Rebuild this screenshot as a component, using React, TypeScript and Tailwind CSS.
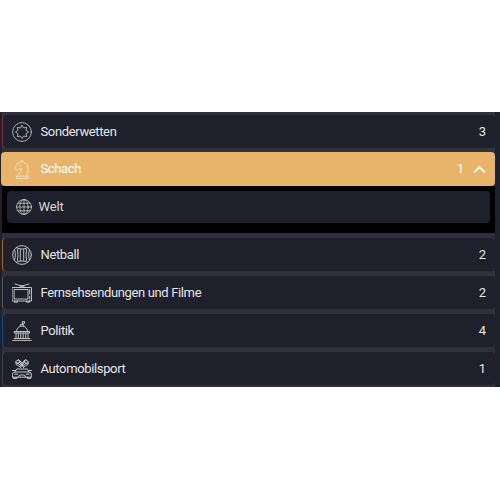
import type { ReactNode } from "react";

const svgProps = {
  width: 20,
  height: 20,
  viewBox: "0 0 20 20",
  fill: "none",
  stroke: "currentColor",
  strokeWidth: 0.9,
  strokeLinejoin: "round" as const,
  strokeLinecap: "round" as const,
};

const SpecialsIcon = () => (
  <svg {...svgProps} strokeWidth={0.8}>
    <circle cx="10" cy="10" r="9.4" />
    <path d="M10 3.500L11.700 5.900L14.600 5.400L14.100 8.300L16.500 10L14.100 11.700L14.600 14.600L11.700 14.100L10 16.500L8.300 14.100L5.400 14.600L5.900 11.700L3.500 10L5.900 8.300L5.400 5.400L8.300 5.900Z" />
  </svg>
);

const KnightIcon = () => (
  <svg {...svgProps}>
    <path d="M4.800 19.400h11.400v-2.300H4.800zM6.300 17c0-3.200 3.400-4.300 3.700-7.300-1.400.3-2.300.1-3.300.5L5.200 11.500 3 9.800C3.500 7.700 4.500 6.300 5.500 4.500L8.500 3.300 10 .8l1.300 2.600c3.200.8 4.700 3 4.900 6.100.1 2.700-1.200 4.700-.9 7.500M7.300 6.300h1" />
  </svg>
);

const GlobeIcon = () => (
  <svg {...svgProps} width={16} height={16} strokeWidth={0.9}>
    <circle cx="10" cy="10" r="9.300" />
    <ellipse cx="10" cy="10" rx="5.200" ry="9.300" />
    <path d="M10 .7v18.600M.7 10h18.600M2.500 5.300h15M2.500 14.700h15" />
  </svg>
);

const NetballIcon = () => (
  <svg {...svgProps}>
    <circle cx="10" cy="10" r="9.400" />
    <path d="M4.500 2.800c3 1.700 8 1.700 11 0M4.500 17.200c3-1.700 8-1.700 11 0M2.600 5c1 3.500 1 6.500 0 10M17.400 5c-1 3.500-1 6.500 0 10M5.500 4.500q1 5.500 0 11M8.300 4.500v11M11.700 4.500v11M14.500 4.500q-1 5.500 0 11" />
  </svg>
);

const TvIcon = () => (
  <svg {...svgProps}>
    <path d="M.5 4.500h19v13.500H.5zM2.500 6.500h13.500v9.500H2.500zM17.700 6.500v4.500M17.700 13.500v2.500M2.500 18v1.200h3V18M14.500 18v1.200h3V18M10 3L3 1M10 3L17 1M7 4.500c.7-2 5.300-2 6 0" />
  </svg>
);

const CapitolIcon = () => (
  <svg {...svgProps}>
    <path d="M.7 19.400h18.600M2 17.500h16M2.500 10.500h15v1.500H2.500zM4 12v5.500M6.300 12v5.500M8.800 12v5.500M11.200 12v5.500M13.700 12v5.500M16 12v5.500M4.500 10.200C5 3.200 15 3.200 15.500 10.200M8.300 5V3.700h3.400V5M10.300 3.500V.6h2.300v1.700h-2.300" />
  </svg>
);

const RacingIcon = () => (
  <svg {...svgProps} strokeWidth={0.95}>
    <path d="M8.500 8.200L4 5.300 3.800 2.500 6.500.7 9.500 3.200 10 5.500 10.500 3.200 13.500.7 16.200 2.500 16 5.300 11.500 8.200M4 2.800l5 4M6.500 1l2.800 4.800M16 2.800l-5 4M13.500 1l-2.800 4.800M8.500 2.700L4.200 5.200M11.500 2.700l4.300 2.500M10 5.500L8.500 8.500M10 5.500l1.500 3" />
    <path d="M3 13l1.500-3h11l1.500 3M.7 14.200L3 13h14l2.300 1.200v4H.7zM1.200 18.200v1.200h3.500v-1.200M15.300 18.200v1.200h3.500v-1.200M.5 11.500h2.500M19.500 11.500H17M2.700 15.200h3M14.300 15.200h3M6.500 18l1-2h5l1 2" />
  </svg>
);

type RowProps = { icon: ReactNode; label: string; count: number; edge: string };

const Row = ({ icon, label, count, edge }: RowProps) => (
  <div className={`flex h-[33px] shrink-0 items-center rounded-[4px] border-l bg-[#1e202b] pl-[9px] pr-[9px] text-[#e6e6e8] ${edge}`}>
    <span className="w-5 shrink-0 text-[#d0d0d3]">{icon}</span>
    <span className="ml-[8.500px] flex-1 tracking-[-0.36px]">{label}</span>
    <span>{count}</span>
  </div>
);

export default function App() {
  return (
    <div className="h-[500px] w-[500px] overflow-hidden bg-white pt-[112px] font-['Roboto',sans-serif] text-[13px] leading-4">
      <div className="h-[275px] bg-[#1e202b] pl-[2px] pr-[5px]">
        <div className="flex h-full flex-col bg-[#302f3b] pt-[3px]">
          <Row icon={<SpecialsIcon />} label="Sonderwetten" count={3} edge="border-[#852b3d]" />
          <div className="-ml-px mt-1 flex h-[34px] shrink-0 items-center rounded-[4px] bg-[#e7b469] pl-[11px] pr-[9px] text-white">
            <span className="w-5 shrink-0 text-[#fbe9cb]"><KnightIcon /></span>
            <span className="ml-[8.500px] flex-1 tracking-[-0.36px]">Schach</span>
            <span>1</span>
            <svg className="ml-[9px]" width="13" height="9" viewBox="0 0 13 9" fill="none" stroke="currentColor" strokeWidth="1.900">
              <path d="M1.200 7.300l5.300-5.300 5.300 5.300" />
            </svg>
          </div>
          <div className="mb-[5px] h-[47px] shrink-0 bg-black px-[5px] pt-[5px]">
            <div className="flex h-8 items-center rounded-[4px] bg-[#1e202b] pl-[8.500px] text-[#d6d6d8]">
              <GlobeIcon />
              <span className="ml-[7px] tracking-[-0.15px]">Welt</span>
            </div>
          </div>
          <div className="flex flex-col gap-[5px]">
            <Row icon={<NetballIcon />} label="Netball" count={2} edge="border-[#a86a25]" />
            <Row icon={<TvIcon />} label="Fernsehsendungen und Filme" count={2} edge="border-[#565660]" />
            <Row icon={<CapitolIcon />} label="Politik" count={4} edge="border-[#075083]" />
            <Row icon={<RacingIcon />} label="Automobilsport" count={1} edge="border-[#41414b]" />
          </div>
        </div>
      </div>
    </div>
  );
}
